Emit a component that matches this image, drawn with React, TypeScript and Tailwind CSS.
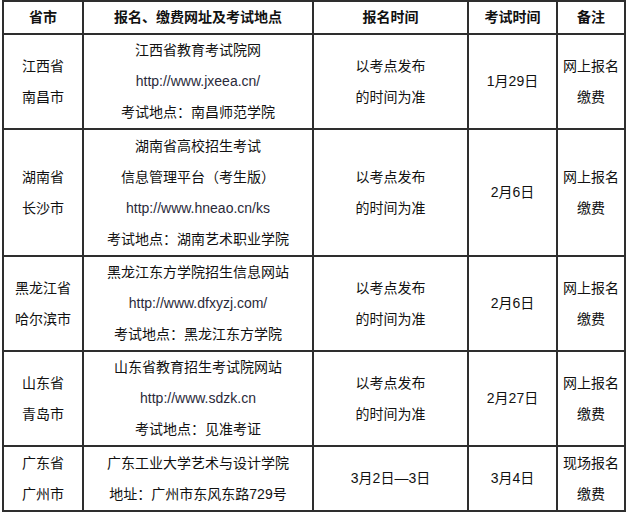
const rows: { h: string; city: string[]; site: string[]; reg: string[]; exam: string; note: string[] }[] = [
  {
    h: "h-[95px]",
    city: ["江西省", "南昌市"],
    site: ["江西省教育考试院网", "http://www.jxeea.cn/", "考试地点：南昌师范学院"],
    reg: ["以考点发布", "的时间为准"],
    exam: "1月29日",
    note: ["网上报名", "缴费"],
  },
  {
    h: "h-[127px]",
    city: ["湖南省", "长沙市"],
    site: ["湖南省高校招生考试", "信息管理平台（考生版）", "http://www.hneao.cn/ks", "考试地点：湖南艺术职业学院"],
    reg: ["以考点发布", "的时间为准"],
    exam: "2月6日",
    note: ["网上报名", "缴费"],
  },
  {
    h: "h-[92px]",
    city: ["黑龙江省", "哈尔滨市"],
    site: ["黑龙江东方学院招生信息网站", "http://www.dfxyzj.com/", "考试地点：黑龙江东方学院"],
    reg: ["以考点发布", "的时间为准"],
    exam: "2月6日",
    note: ["网上报名", "缴费"],
  },
  {
    h: "h-[95px]",
    city: ["山东省", "青岛市"],
    site: ["山东省教育招生考试院网站", "http://www.sdzk.cn", "考试地点：见准考证"],
    reg: ["以考点发布", "的时间为准"],
    exam: "2月27日",
    note: ["网上报名", "缴费"],
  },
  {
    h: "h-[65px]",
    city: ["广东省", "广州市"],
    site: ["广东工业大学艺术与设计学院", "地址：广州市东风东路729号"],
    reg: ["3月2日—3日"],
    exam: "3月4日",
    note: ["现场报名", "缴费"],
  },
];

function Lines({ items }: { items: string[] }) {
  return (
    <>
      {items.map((t) => (
        <div key={t} className={t.startsWith("http") ? "text-[#2a2a3a]" : ""}>
          {t}
        </div>
      ))}
    </>
  );
}

const cell = "border-2 border-[#2e2e2e] text-center align-middle p-0";

export default function App() {
  return (
    <div className="bg-white w-[629px] h-[512px] pl-[2px] pt-0">
      <table
        className="table-fixed border-collapse w-[622px] text-[14px] leading-[31px] text-[#111]"
        style={{ fontFamily: '"Liberation Sans", "Noto Sans CJK SC", sans-serif' }}
      >
        <colgroup>
          <col className="w-[80px]" />
          <col className="w-[230px]" />
          <col className="w-[155px]" />
          <col className="w-[89px]" />
          <col className="w-[68px]" />
        </colgroup>
        <thead>
          <tr className="h-[31px] font-bold">
            <th className={cell}>省市</th>
            <th className={cell}>报名、缴费网址及考试地点</th>
            <th className={cell}>报名时间</th>
            <th className={cell}>考试时间</th>
            <th className={cell}>备注</th>
          </tr>
        </thead>
        <tbody>
          {rows.map((r) => (
            <tr key={r.city[0]} className={r.h}>
              <td className={cell}>
                <Lines items={r.city} />
              </td>
              <td className={cell}>
                <Lines items={r.site} />
              </td>
              <td className={cell}>
                <Lines items={r.reg} />
              </td>
              <td className={cell}>{r.exam}</td>
              <td className={cell}>
                <Lines items={r.note} />
              </td>
            </tr>
          ))}
        </tbody>
      </table>
    </div>
  );
}
